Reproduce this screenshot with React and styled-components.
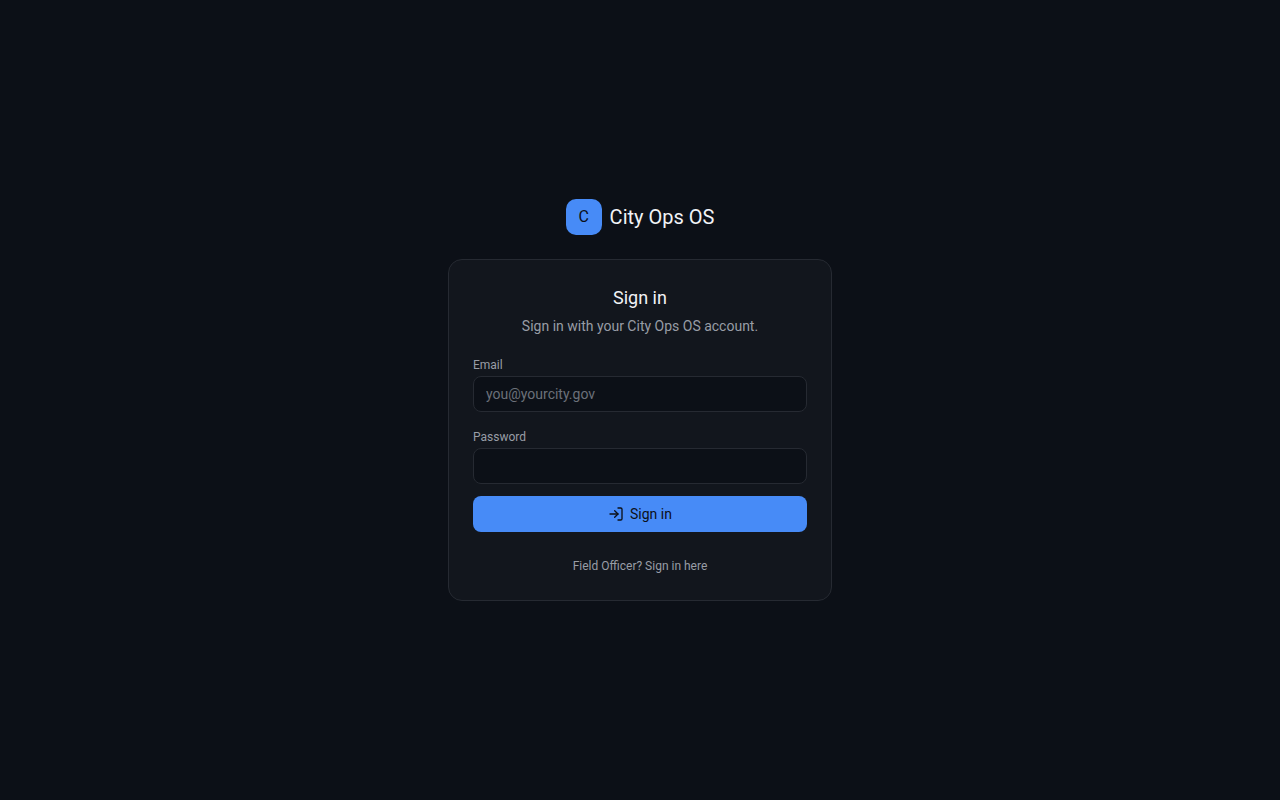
import React from "react";
import styled, { createGlobalStyle } from "styled-components";
import { LogIn } from "lucide-react";

const GlobalStyle = createGlobalStyle`
  *, *::before, *::after { box-sizing: border-box; }
  body {
    margin: 0;
    background: #0c1017;
    color: #f1f3f6;
    font-family: Roboto, "Liberation Sans", Arial, sans-serif;
    font-size: 14px;
    line-height: 20px;
    -webkit-font-smoothing: antialiased;
  }
`;

const Page = styled.main`
  min-height: 100vh;
  display: flex;
  flex-direction: column;
  align-items: center;
  justify-content: center;
  gap: 24px;
  padding: 16px;
`;

const Brand = styled.div`
  display: flex;
  align-items: center;
  gap: 8px;
`;

const BrandMark = styled.span`
  display: grid;
  place-items: center;
  width: 36px;
  height: 36px;
  border-radius: 10px;
  background: #478bf7;
  color: #0c1017;
  font-size: 16px;
`;

const BrandName = styled.span`
  font-size: 20px;
  line-height: 28px;
`;

const Card = styled.section`
  width: 100%;
  max-width: 384px;
  padding: 24px;
  border: 1px solid #262a32;
  border-radius: 14px;
  background: #12161d;
`;

const CardHeader = styled.header`
  display: flex;
  flex-direction: column;
  gap: 4px;
  text-align: center;
`;

const Title = styled.h1`
  margin: 0;
  font-size: 18px;
  font-weight: 400;
  line-height: 28px;
`;

const Subtitle = styled.p`
  margin: 0;
  color: #989da6;
`;

const Form = styled.form`
  display: flex;
  flex-direction: column;
  gap: 12px;
  margin-top: 20px;
`;

const Fields = styled.div`
  display: flex;
  flex-direction: column;
  gap: 16px;
`;

const Field = styled.div`
  display: flex;
  flex-direction: column;
  gap: 2px;
`;

const Label = styled.label`
  color: #989da6;
  font-size: 12px;
  line-height: 18px;
`;

const Input = styled.input`
  width: 100%;
  height: 36px;
  padding: 0 12px;
  border: 1px solid #262a32;
  border-radius: 8px;
  background: #0c1017;
  color: inherit;
  font: inherit;
  &::placeholder { color: #6b707a; opacity: 1; }
`;

const SubmitButton = styled.button`
  display: flex;
  align-items: center;
  justify-content: center;
  gap: 6px;
  height: 36px;
  border: 0;
  border-radius: 8px;
  background: #478bf7;
  color: #0c1017;
  font: inherit;
  cursor: pointer;
`;

const Footer = styled.p`
  margin: 24px 0 0;
  font-size: 12px;
  line-height: 20px;
  text-align: center;
`;

const FooterLink = styled.a`
  color: #989da6;
  text-decoration: none;
`;

export default function App() {
  return (
    <>
      <GlobalStyle />
      <Page>
        <Brand>
          <BrandMark>C</BrandMark>
          <BrandName>City Ops OS</BrandName>
        </Brand>
        <Card>
          <CardHeader>
            <Title>Sign in</Title>
            <Subtitle>Sign in with your City Ops OS account.</Subtitle>
          </CardHeader>
          <Form>
            <Fields>
              <Field>
                <Label htmlFor="email">Email</Label>
                <Input id="email" type="email" placeholder="you@yourcity.gov" />
              </Field>
              <Field>
                <Label htmlFor="password">Password</Label>
                <Input id="password" type="password" />
              </Field>
            </Fields>
            <SubmitButton type="submit">
              <LogIn size={16} aria-hidden="true" />
              Sign in
            </SubmitButton>
          </Form>
          <Footer>
            <FooterLink href="#field-officer">Field Officer? Sign in here</FooterLink>
          </Footer>
        </Card>
      </Page>
    </>
  );
}
